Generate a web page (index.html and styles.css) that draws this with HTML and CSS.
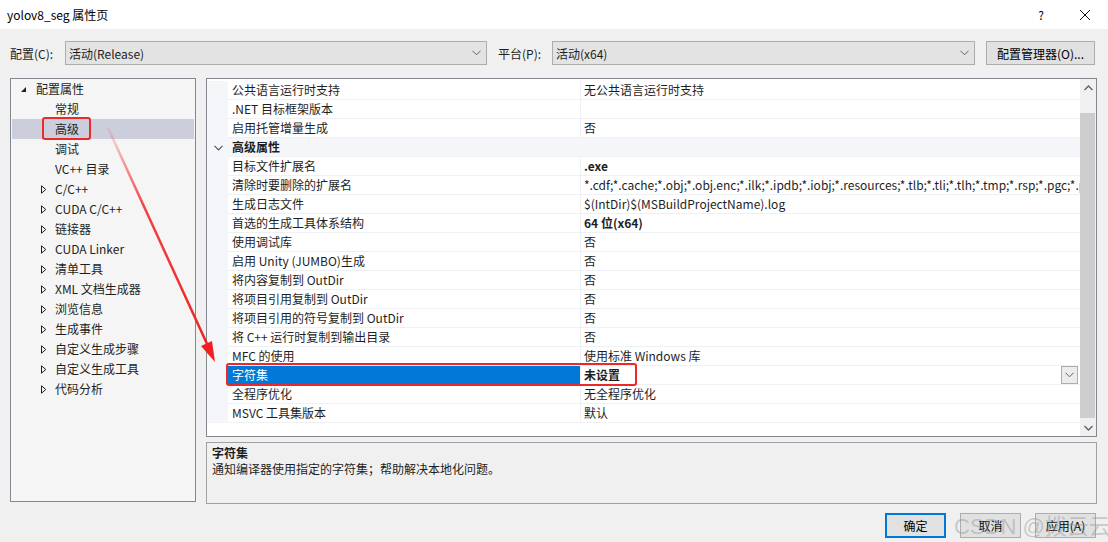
FILE: index.html
```html
<!DOCTYPE html>
<html lang="zh-CN">
<head>
<meta charset="utf-8">
<title>yolov8_seg 属性页</title>
<link rel="stylesheet" href="styles.css">
</head>
<body>
<div class="titlebar">
  <span class="title">yolov8_seg 属性页</span>
  <span class="help">?</span>
  <span class="close"><svg width="12" height="12" viewBox="0 0 12 12"><path d="M1 1 L11 11 M11 1 L1 11" stroke="#111" stroke-width="1" fill="none"/></svg></span>
</div>

<div class="config-row">
  <span class="lbl lbl-config">配置(C):</span>
  <div class="combo combo-config"><span class="combo-text">活动(Release)</span><svg class="chev" width="9" height="6" viewBox="0 0 9 6"><path d="M0.5 0.8 L4.5 4.8 L8.5 0.8" stroke="#606060" stroke-width="1" fill="none"/></svg></div>
  <span class="lbl lbl-platform">平台(P):</span>
  <div class="combo combo-platform"><span class="combo-text">活动(x64)</span><svg class="chev" width="9" height="6" viewBox="0 0 9 6"><path d="M0.5 0.8 L4.5 4.8 L8.5 0.8" stroke="#606060" stroke-width="1" fill="none"/></svg></div>
  <button class="btn btn-mgr">配置管理器(O)...</button>
</div>

<div class="main">
  <div class="tree">
    <div class="node root"><span class="twisty"><svg width="7" height="7" viewBox="0 0 7 7"><path d="M6 1 L6 6 L1 6 Z" fill="#1e1e1e"/></svg></span><span>配置属性</span></div>
    <div class="node leaf">常规</div>
    <div class="node leaf selected">高级</div>
    <div class="node leaf">调试</div>
    <div class="node leaf">VC++ 目录</div>
    <div class="node folder"><span class="twisty"><svg width="6" height="9" viewBox="0 0 6 9"><path d="M0.5 0.8 L4.8 4.5 L0.5 8.2 Z" fill="none" stroke="#1e1e1e" stroke-width="1"/></svg></span><span>C/C++</span></div>
    <div class="node folder"><span class="twisty"><svg width="6" height="9" viewBox="0 0 6 9"><path d="M0.5 0.8 L4.8 4.5 L0.5 8.2 Z" fill="none" stroke="#1e1e1e" stroke-width="1"/></svg></span><span>CUDA C/C++</span></div>
    <div class="node folder"><span class="twisty"><svg width="6" height="9" viewBox="0 0 6 9"><path d="M0.5 0.8 L4.8 4.5 L0.5 8.2 Z" fill="none" stroke="#1e1e1e" stroke-width="1"/></svg></span><span>链接器</span></div>
    <div class="node folder"><span class="twisty"><svg width="6" height="9" viewBox="0 0 6 9"><path d="M0.5 0.8 L4.8 4.5 L0.5 8.2 Z" fill="none" stroke="#1e1e1e" stroke-width="1"/></svg></span><span>CUDA Linker</span></div>
    <div class="node folder"><span class="twisty"><svg width="6" height="9" viewBox="0 0 6 9"><path d="M0.5 0.8 L4.8 4.5 L0.5 8.2 Z" fill="none" stroke="#1e1e1e" stroke-width="1"/></svg></span><span>清单工具</span></div>
    <div class="node folder"><span class="twisty"><svg width="6" height="9" viewBox="0 0 6 9"><path d="M0.5 0.8 L4.8 4.5 L0.5 8.2 Z" fill="none" stroke="#1e1e1e" stroke-width="1"/></svg></span><span>XML 文档生成器</span></div>
    <div class="node folder"><span class="twisty"><svg width="6" height="9" viewBox="0 0 6 9"><path d="M0.5 0.8 L4.8 4.5 L0.5 8.2 Z" fill="none" stroke="#1e1e1e" stroke-width="1"/></svg></span><span>浏览信息</span></div>
    <div class="node folder"><span class="twisty"><svg width="6" height="9" viewBox="0 0 6 9"><path d="M0.5 0.8 L4.8 4.5 L0.5 8.2 Z" fill="none" stroke="#1e1e1e" stroke-width="1"/></svg></span><span>生成事件</span></div>
    <div class="node folder"><span class="twisty"><svg width="6" height="9" viewBox="0 0 6 9"><path d="M0.5 0.8 L4.8 4.5 L0.5 8.2 Z" fill="none" stroke="#1e1e1e" stroke-width="1"/></svg></span><span>自定义生成步骤</span></div>
    <div class="node folder"><span class="twisty"><svg width="6" height="9" viewBox="0 0 6 9"><path d="M0.5 0.8 L4.8 4.5 L0.5 8.2 Z" fill="none" stroke="#1e1e1e" stroke-width="1"/></svg></span><span>自定义生成工具</span></div>
    <div class="node folder"><span class="twisty"><svg width="6" height="9" viewBox="0 0 6 9"><path d="M0.5 0.8 L4.8 4.5 L0.5 8.2 Z" fill="none" stroke="#1e1e1e" stroke-width="1"/></svg></span><span>代码分析</span></div>
  </div>

  <div class="right">
    <div class="grid">
      <div class="rows">
        <div class="row"><div class="gut"></div><div class="name">公共语言运行时支持</div><div class="val">无公共语言运行时支持</div></div>
        <div class="row"><div class="gut"></div><div class="name">.NET 目标框架版本</div><div class="val"></div></div>
        <div class="row"><div class="gut"></div><div class="name">启用托管增量生成</div><div class="val">否</div></div>
        <div class="row category"><div class="gut"><svg width="9" height="6" viewBox="0 0 9 6"><path d="M0.5 0.8 L4.5 4.8 L8.5 0.8" stroke="#555" stroke-width="1.2" fill="none"/></svg></div><div class="name">高级属性</div><div class="val"></div></div>
        <div class="row"><div class="gut"></div><div class="name">目标文件扩展名</div><div class="val bold">.exe</div></div>
        <div class="row"><div class="gut"></div><div class="name">清除时要删除的扩展名</div><div class="val">*.cdf;*.cache;*.obj;*.obj.enc;*.ilk;*.ipdb;*.iobj;*.resources;*.tlb;*.tli;*.tlh;*.tmp;*.rsp;*.pgc;*.pgd;*.meta;*.tlog;*.manifest;*.res;*.pch;*.exp;*.idb;*.rep;*.xdc;*.pdb</div></div>
        <div class="row"><div class="gut"></div><div class="name">生成日志文件</div><div class="val">$(IntDir)$(MSBuildProjectName).log</div></div>
        <div class="row"><div class="gut"></div><div class="name">首选的生成工具体系结构</div><div class="val bold">64 位(x64)</div></div>
        <div class="row"><div class="gut"></div><div class="name">使用调试库</div><div class="val">否</div></div>
        <div class="row"><div class="gut"></div><div class="name">启用 Unity (JUMBO)生成</div><div class="val">否</div></div>
        <div class="row"><div class="gut"></div><div class="name">将内容复制到 OutDir</div><div class="val">否</div></div>
        <div class="row"><div class="gut"></div><div class="name">将项目引用复制到 OutDir</div><div class="val">否</div></div>
        <div class="row"><div class="gut"></div><div class="name">将项目引用的符号复制到 OutDir</div><div class="val">否</div></div>
        <div class="row"><div class="gut"></div><div class="name">将 C++ 运行时复制到输出目录</div><div class="val">否</div></div>
        <div class="row"><div class="gut"></div><div class="name">MFC 的使用</div><div class="val">使用标准 Windows 库</div></div>
        <div class="row selected"><div class="gut"></div><div class="name">字符集</div><div class="val bold"><span class="val-text">未设置</span><span class="dd"><svg width="9" height="6" viewBox="0 0 9 6"><path d="M0.5 0.8 L4.5 4.8 L8.5 0.8" stroke="#606060" stroke-width="1" fill="none"/></svg></span></div></div>
        <div class="row"><div class="gut"></div><div class="name">全程序优化</div><div class="val">无全程序优化</div></div>
        <div class="row"><div class="gut"></div><div class="name">MSVC 工具集版本</div><div class="val">默认</div></div>
      </div>
      <div class="scrollbar">
        <div class="sb-btn"><svg width="9" height="6" viewBox="0 0 9 6"><path d="M0.5 5 L4.5 1 L8.5 5" stroke="#606060" stroke-width="1.3" fill="none"/></svg></div>
        <div class="sb-track"><div class="sb-thumb"></div></div>
        <div class="sb-btn"><svg width="9" height="6" viewBox="0 0 9 6"><path d="M0.5 1 L4.5 5 L8.5 1" stroke="#606060" stroke-width="1.3" fill="none"/></svg></div>
      </div>
    </div>
    <div class="desc">
      <div class="desc-title">字符集</div>
      <div class="desc-text">通知编译器使用指定的字符集；帮助解决本地化问题。</div>
    </div>
  </div>
</div>

<div class="buttons">
  <button class="btn btn-ok">确定</button>
  <button class="btn">取消</button>
  <button class="btn">应用(A)</button>
</div>

<div class="mark mark-tree"></div>
<div class="mark mark-row"></div>
<svg class="arrow" width="1108" height="542" viewBox="0 0 1108 542">
  <defs>
    <linearGradient id="ag" x1="108" y1="128" x2="210" y2="352" gradientUnits="userSpaceOnUse">
      <stop offset="0" stop-color="#f03030" stop-opacity="0.1"/>
      <stop offset="0.35" stop-color="#f03030" stop-opacity="0.9"/>
      <stop offset="1" stop-color="#f02020" stop-opacity="1"/>
    </linearGradient>
  </defs>
  <line x1="108" y1="128" x2="208" y2="346" stroke="url(#ag)" stroke-width="2.5"/>
  <polygon points="215,362 201,346 212,341" fill="#f02020"/>
</svg>
<div class="watermark">CSDN @拨云云</div>
</body>
</html>
```

FILE: styles.css
```css
* { box-sizing: border-box; }

html, body {
  margin: 0;
  padding: 0;
}

body {
  width: 1108px;
  height: 542px;
  overflow: hidden;
  position: relative;
  background: #f0f0f0;
  color: #1e1e1e;
  font-family: "Noto Sans CJK SC", "Microsoft YaHei", sans-serif;
  font-size: 12px;
}

/* title bar */
.titlebar {
  height: 29px;
  background: #ffffff;
  display: flex;
  align-items: center;
  padding-left: 7px;
  color: #000;
}
.title { flex: 1; font-size: 12px; }
.help {
  width: 14px;
  margin-right: 31px;
  font-size: 12px;
  text-align: center;
}
.close {
  width: 12px;
  height: 12px;
  margin-right: 17px;
  display: flex;
}

/* config row */
.config-row {
  display: flex;
  align-items: center;
  height: 24px;
  margin-top: 12px;
  padding-left: 10px;
}
.lbl { display: block; white-space: nowrap; }
.lbl-config { width: 55px; }
.lbl-platform { width: 54px; }
.combo {
  height: 24px;
  background: #e3e3e3;
  border: 1px solid #adadad;
  display: flex;
  align-items: center;
  padding-left: 3px;
  padding-right: 5px;
}
.combo-text { flex: 1; }
.combo-config { width: 422px; margin-right: 11px; }
.combo-platform { width: 423px; margin-right: 11px; }

.btn {
  font-family: inherit;
  font-size: 12px;
  color: #000;
  background: #e1e1e1;
  border: 1px solid #adadad;
  padding: 0;
  height: 25px;
  width: 61px;
}
.btn-mgr { width: 109px; height: 24px; }
.btn-ok { border: 2px solid #0078d7; }

/* main area */
.main {
  display: flex;
  margin-top: 13px;
  padding-left: 10px;
  height: 426px;
}

.tree {
  width: 186px;
  height: 424px;
  background: #f5f5f5;
  border: 1px solid #828790;
  padding: 0 1px;
}
.node {
  height: 20px;
  line-height: 20px;
  white-space: nowrap;
  display: flex;
  align-items: center;
}
.node.root { padding-left: 8px; }
.node.root .twisty { width: 16px; display: flex; align-items: center; padding-top: 1px; }
.node.leaf { padding-left: 43px; }
.node.folder { padding-left: 29px; }
.node.folder .twisty { width: 14px; display: flex; align-items: center; padding-top: 1px; }
.node.selected { background: #cccedb; }

.right {
  margin-left: 10px;
  width: 891px;
  display: flex;
  flex-direction: column;
}

.grid {
  height: 359px;
  background: #ffffff;
  border: 1px solid #828790;
  display: flex;
}
.rows {
  flex: 1;
  padding-top: 2px;
  overflow: hidden;
}
.row {
  display: flex;
  height: 19px;
  line-height: 18px;
}
.gut {
  width: 21px;
  flex: none;
  background: #f5f6f9;
  display: flex;
  align-items: center;
  justify-content: center;
  padding-left: 1px;
}
.name {
  width: 353px;
  flex: none;
  padding-left: 4px;
  border-bottom: 1px solid #eef0f4;
  border-right: 1px solid #eef0f4;
  white-space: nowrap;
}
.val {
  flex: 1;
  min-width: 0;
  padding-left: 3px;
  border-bottom: 1px solid #eef0f4;
  white-space: nowrap;
  overflow: hidden;
  display: flex;
  align-items: center;
}
.bold { font-weight: bold; }

.row.category .gut,
.row.category .name,
.row.category .val {
  background: #f4f6fa;
  border-right: none;
}
.row.category .name { font-weight: bold; }

.row.selected .name {
  background: #0078d7;
  color: #ffffff;
}
.val-text { flex: 1; }
.dd {
  width: 17px;
  height: 18px;
  margin-right: 2px;
  border: 1px solid #adadad;
  background: #ececec;
  display: flex;
  align-items: center;
  justify-content: center;
}

.scrollbar {
  width: 16px;
  flex: none;
  background: #f0f0f0;
  display: flex;
  flex-direction: column;
}
.sb-btn {
  height: 17px;
  display: flex;
  align-items: center;
  justify-content: center;
}
.sb-track {
  flex: 1;
  padding: 17px 0 1px 0;
}
.sb-thumb {
  height: 305px;
  background: #cdcdcd;
  margin: 0 1px 0 0;
}

.desc {
  margin-top: 5px;
  height: 62px;
  background: #f0f0f0;
  border: 1px solid #a0a0a0;
  padding: 2px 5px;
  line-height: 16px;
}
.desc-title { font-weight: bold; }

/* bottom buttons */
.buttons {
  display: flex;
  justify-content: flex-end;
  gap: 14px;
  margin-top: 9px;
  padding-right: 12px;
}

/* annotation overlays */
.mark {
  position: absolute;
  border: 2px solid #ea2a2a;
  border-radius: 3px;
}
.mark-tree { left: 42px; top: 117px; width: 49px; height: 23px; }
.mark-row { left: 226px; top: 363px; width: 411px; height: 23px; }
.arrow {
  position: absolute;
  left: 0;
  top: 0;
  pointer-events: none;
}

.watermark {
  position: absolute;
  left: 954px;
  top: 508px;
  font-size: 22px;
  font-family: "Liberation Sans", "Noto Sans CJK SC", sans-serif;
  color: rgba(150, 150, 150, 0.45);
  white-space: nowrap;
  pointer-events: none;
}
```
